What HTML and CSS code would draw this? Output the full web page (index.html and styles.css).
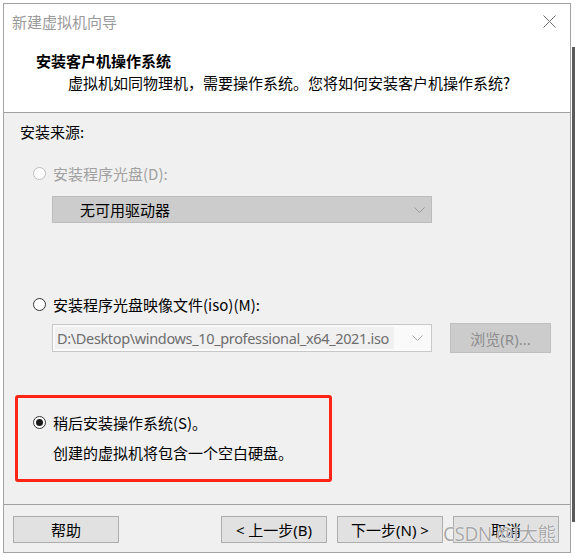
FILE: index.html
```html
<!DOCTYPE html>
<html lang="zh-CN">
<head>
<meta charset="utf-8">
<title>新建虚拟机向导</title>
<link rel="stylesheet" href="styles.css">
</head>
<body>
<div class="page">
  <div class="dialog">
    <div class="header">
      <div class="titlebar">
        <span class="title">新建虚拟机向导</span>
        <svg class="close" width="13" height="13" viewBox="0 0 13 13"><path d="M0.5 0.5 L12.5 12.5 M12.5 0.5 L0.5 12.5" stroke="#6e6e6e" stroke-width="1" fill="none"/></svg>
      </div>
      <div class="heading">安装客户机操作系统</div>
      <div class="subtitle">虚拟机如同物理机，需要操作系统。您将如何安装客户机操作系统?</div>
    </div>
    <div class="content">
      <div class="section-label">安装来源:</div>
      <div class="radio-row disabled first">
        <span class="radio"></span>
        <span>安装程序光盘(D):</span>
      </div>
      <div class="combo combo-disabled">
        <span class="combo-text">无可用驱动器</span>
        <svg class="chev" width="11" height="6" viewBox="0 0 11 6"><path d="M0.5 0.5 L5.5 5.5 L10.5 0.5" stroke="#9a9a9a" fill="none"/></svg>
      </div>
      <div class="radio-row second">
        <span class="radio"></span>
        <span>安装程序光盘映像文件(iso)(M):</span>
      </div>
      <div class="iso-row">
        <div class="combo combo-iso">
          <span class="iso-text">D:\Desktop\windows_10_professional_x64_2021.iso</span>
          <svg class="chev" width="11" height="6" viewBox="0 0 11 6"><path d="M0.5 0.5 L5.5 5.5 L10.5 0.5" stroke="#a8a8a8" fill="none"/></svg>
        </div>
        <div class="browse">浏览(R)...</div>
      </div>
      <div class="highlight">
        <div class="radio-row">
          <span class="radio checked"></span>
          <span>稍后安装操作系统(S)。</span>
        </div>
        <div class="note">创建的虚拟机将包含一个空白硬盘。</div>
      </div>
    </div>
    <div class="footer">
      <div class="btn">帮助</div>
      <div class="spacer"></div>
      <div class="btn">&lt; 上一步(B)</div>
      <div class="btn">下一步(N) &gt;</div>
      <div class="btn">取消</div>
      <div class="watermark">CSDN @I大熊</div>
    </div>
  </div>
  <div class="edge"></div>
</div>
</body>
</html>
```

FILE: styles.css
```css
* { box-sizing: border-box; }
html, body { margin: 0; padding: 0; }
body {
  background: #ffffff;
  font-family: "Segoe UI", "Noto Sans", "Noto Sans CJK SC", sans-serif;
  font-size: 15px;
  color: #000;
  width: 575px;
  height: 557px;
  overflow: hidden;
}
.page {
  display: flex;
  align-items: flex-start;
}
.dialog {
  margin: 3px 0 0 3px;
  width: 569px;
  height: 550px;
  border: 1px solid #a3a3a3;
  background: #f0f0f0;
  display: flex;
  flex-direction: column;
}
.edge {
  margin: 47px 0 0 1px;
  width: 3px;
  height: 475px;
  background: #5a5a5a;
}
.header {
  background: #fff;
  height: 109px;
  border-bottom: 1px solid #a0a0a0;
  flex: none;
}
.titlebar {
  height: 36px;
  display: flex;
  align-items: center;
  padding-left: 8px;
  padding-right: 14px;
}
.title {
  flex: 1;
  color: #9a9a9a;
  line-height: 36px;
  font-family: "Noto Sans CJK SC", sans-serif;
}
.close { margin-top: -1px; }
.heading {
  margin-top: 11px;
  padding-left: 32px;
  line-height: 20px;
  font-weight: bold;
  font-family: "Noto Sans CJK SC", sans-serif;
}
.subtitle {
  margin-top: 2px;
  padding-left: 64px;
  line-height: 20px;
  font-family: "Noto Sans CJK SC", sans-serif;
}
.content {
  padding: 9px 0 0 16px;
  flex: 1;
}
.section-label {
  line-height: 20px;
  font-family: "Noto Sans CJK SC", sans-serif;
}
.radio-row {
  display: flex;
  align-items: center;
  height: 20px;
  padding-left: 13px;
  gap: 7px;
  font-family: "Segoe UI", "Noto Sans CJK SC", sans-serif;
}
.radio-row.first { margin-top: 21px; }
.radio-row.second { margin-top: 71px; }
.radio-row.disabled { color: #a0a0a0; }
.radio {
  width: 13px;
  height: 13px;
  border-radius: 50%;
  border: 1px solid #333;
  background: #fff;
  flex: none;
  position: relative;
}
.disabled .radio {
  border-color: #bcbcbc;
  background: #fcfcfc;
}
.radio.checked::after {
  content: "";
  position: absolute;
  left: 2px;
  top: 2px;
  width: 7px;
  height: 7px;
  border-radius: 50%;
  background: #1a1a1a;
}
.combo {
  margin-left: 32px;
  width: 380px;
  height: 27px;
  display: flex;
  align-items: center;
  border: 1px solid #bcbcbc;
}
.combo-disabled {
  margin-top: 13px;
  background: #cccccc;
}
.combo-text {
  flex: 1;
  padding-left: 27px;
  font-family: "Noto Sans CJK SC", sans-serif;
}
.chev { margin-right: 6px; flex: none; }
.iso-row {
  margin-top: 9px;
  display: flex;
  align-items: center;
  gap: 18px;
}
.combo-iso {
  height: 28px;
  background: #fafafa;
  border-color: #c8c8c8;
  padding: 2px;
}
.iso-text {
  flex: 1;
  align-self: stretch;
  display: flex;
  align-items: center;
  padding-left: 2px;
  margin-right: 18px;
  background: #f0f0f0;
  color: #6d6d6d;
  font-family: "Segoe UI", "Noto Sans", sans-serif;
  font-size: 14.5px;
  letter-spacing: -0.35px;
  white-space: nowrap;
}
.browse {
  width: 101px;
  height: 30px;
  background: #cccccc;
  border: 1px solid #bfbfbf;
  color: #8c8c8c;
  display: flex;
  align-items: center;
  justify-content: center;
  font-family: "Noto Sans", "Noto Sans CJK SC", sans-serif;
}
.highlight {
  margin-top: 42px;
  margin-left: -5px;
  width: 317px;
  border: 3px solid #ff2414;
  border-radius: 3px;
  padding: 14px 0 16px 2px;
}
.note {
  margin-top: 11px;
  padding-left: 33px;
  line-height: 20px;
  font-family: "Noto Sans CJK SC", sans-serif;
}
.footer {
  position: relative;
  flex: none;
  border-top: 1px solid #a0a0a0;
  padding: 11px 11px 9px 9px;
  display: flex;
  gap: 10px;
}
.spacer { flex: 1; }
.btn {
  width: 106px;
  height: 27px;
  background: #e1e1e1;
  border: 1px solid #adadad;
  display: flex;
  align-items: center;
  justify-content: center;
  font-family: "Segoe UI", "Noto Sans", "Noto Sans CJK SC", sans-serif;
}
.watermark {
  position: absolute;
  left: 439px;
  top: 14px;
  font-size: 19px;
  color: rgba(140, 140, 140, 0.75);
  font-family: "Noto Sans", "Noto Sans CJK SC", sans-serif;
  text-shadow: 0 0 1px #fff, 0 0 1px #fff;
  white-space: nowrap;
  letter-spacing: -0.5px;
}
```
